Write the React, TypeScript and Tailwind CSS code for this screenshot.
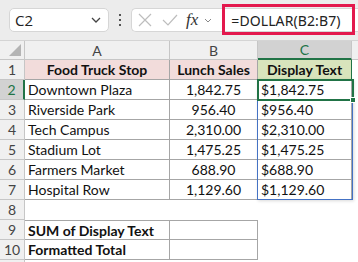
import React from "react";

const rows = [
  { n: 1, a: "Food Truck Stop", b: "Lunch Sales", c: "Display Text", head: true },
  { n: 2, a: "Downtown Plaza", b: "1,842.75", c: "$1,842.75" },
  { n: 3, a: "Riverside Park", b: "956.40", c: "$956.40" },
  { n: 4, a: "Tech Campus", b: "2,310.00", c: "$2,310.00" },
  { n: 5, a: "Stadium Lot", b: "1,475.25", c: "$1,475.25" },
  { n: 6, a: "Farmers Market", b: "688.90", c: "$688.90" },
  { n: 7, a: "Hospital Row", b: "1,129.60", c: "$1,129.60" },
];

const cellFont = { fontFamily: "Lato, 'Liberation Sans', sans-serif" };

function RowHead({ n, active }: { n?: number; active?: boolean }) {
  return (
    <div
      className={`w-[25px] h-full flex items-center justify-center border-r border-b border-[#c6c6c6] text-[14px] ${
        active ? "bg-[#d2d2d2] text-[#217346] border-r-2 border-r-[#217346]" : "bg-[#f0f0f0] text-[#444]"
      }`}
    >
      {n}
    </div>
  );
}

export default function App() {
  return (
    <div className="w-[358px] h-[262px] overflow-hidden bg-white relative" style={cellFont}>
      {/* formula bar */}
      <div className="h-[41px] bg-[#ececec] border-b border-[#d4d4d4] flex items-center pl-[9px] relative">
        <div className="w-[100px] h-[24px] bg-white rounded-[5px] border border-[#d6d6d6] flex items-center justify-between pl-[5px] pr-[7px]">
          <span className="text-[15px] text-[#222]" style={{ fontFamily: "'Open Sans', sans-serif" }}>C2</span>
          <svg width="10" height="6" viewBox="0 0 10 6"><path d="M1 1l4 4 4-4" fill="none" stroke="#444" strokeWidth="1.3" /></svg>
        </div>
        <div className="w-[22px] flex flex-col items-center gap-[3px]">
          <span className="w-[2px] h-[2px] bg-[#555]" />
          <span className="w-[2px] h-[2px] bg-[#555]" />
          <span className="w-[2px] h-[2px] bg-[#555]" />
        </div>
        <div className="flex-1 h-[24px] bg-white rounded-l-[5px] border border-r-0 border-[#d6d6d6] flex items-center pl-[5px]">
          <svg width="14" height="14" viewBox="0 0 14 14" className="ml-[1px]"><path d="M1 1l12 12M13 1L1 13" stroke="#bdbdbd" strokeWidth="1.2" /></svg>
          <svg width="16" height="12" viewBox="0 0 16 12" className="ml-[10px]"><path d="M1 6l5 5L15 1" fill="none" stroke="#bdbdbd" strokeWidth="1.2" /></svg>
          <span className="ml-[8px] text-[17px] italic text-[#333]" style={{ fontFamily: "'Liberation Serif', serif" }}>fx</span>
          <svg width="8" height="5" viewBox="0 0 8 5" className="ml-[6px]"><path d="M1 1l3 3 3-3" fill="none" stroke="#888" strokeWidth="1" /></svg>
          <span className="ml-[19px] text-[14px] text-[#222] tracking-[0.1px]" style={{ fontFamily: "'Noto Sans', sans-serif" }}>=DOLLAR(B2:B7)</span>
        </div>
        <div className="absolute left-[222px] top-[4px] w-[133px] h-[31px] border-[3px] border-[#e3184d]" />
      </div>

      {/* column headers */}
      <div className="flex h-[19px] text-[14px] text-[#444]">
        <div className="w-[25px] h-full bg-[#f0f0f0] border-r border-b border-[#c6c6c6] relative">
          <svg width="12" height="12" viewBox="0 0 12 12" className="absolute right-[3px] bottom-[3px]"><path d="M12 0V12H0Z" fill="#b4b4b4" /></svg>
        </div>
        <div className="w-[145px] h-full bg-[#f0f0f0] border-r border-b border-[#c6c6c6] flex items-center justify-center">A</div>
        <div className="w-[88px] h-full bg-[#f0f0f0] border-r border-b border-[#c6c6c6] flex items-center justify-center">B</div>
        <div className="w-[94px] h-full bg-[#d2d2d2] border-r border-[#c6c6c6] border-b-2 border-b-[#217346] flex items-center justify-center text-[#217346]">C</div>
        <div className="flex-1 h-full bg-[#f0f0f0] border-b border-[#c6c6c6]" />
      </div>

      {/* data */}
      <div className="relative text-[14px] text-[#111]">
        {rows.map((r) => (
          <div key={r.n} className="flex h-[20px]">
            <RowHead n={r.n} active={r.n === 2} />
            <div
              className={`w-[145px] h-full border-r border-b border-[#a6a6a6] flex items-center ${
                r.head ? "bg-[#f2dcdb] font-bold justify-center" : "pl-[3px]"
              }`}
            >
              {r.a}
            </div>
            <div
              className={`w-[88px] h-full border-r border-b border-[#a6a6a6] flex items-center justify-center ${
                r.head ? "bg-[#f2dcdb] font-bold" : ""
              }`}
            >
              {r.b}
            </div>
            <div
              className={`w-[94px] h-full border-r border-b flex items-center ${
                r.head ? "bg-[#d8e4bc] font-bold justify-center border-[#a6a6a6] border-r-[#217346]" : "pl-[3px] border-[#a6a6a6]"
              }`}
            >
              {r.c}
            </div>
          </div>
        ))}

        <div className="flex h-[20px]">
          <RowHead n={8} />
        </div>
        <div className="flex h-[20px]">
          <RowHead n={9} />
          <div className="w-[145px] h-full border-r border-b border-t border-[#a6a6a6] flex items-center pl-[3px] font-bold">SUM of Display Text</div>
          <div className="w-[88px] h-full border-r border-b border-t border-[#a6a6a6]" />
        </div>
        <div className="flex h-[20px]">
          <RowHead n={10} />
          <div className="w-[145px] h-full border-r border-b border-[#a6a6a6] flex items-center pl-[3px] font-bold">Formatted Total</div>
          <div className="w-[88px] h-full border-r border-b border-[#a6a6a6]" />
        </div>
        <div className="flex h-[20px]">
          <RowHead />
        </div>

        {/* referenced range outline C2:C7 */}
        <div className="absolute left-[257px] top-[19px] w-[96px] h-[121px] border border-[#4472c4] shadow-[1px_1px_3px_rgba(0,0,0,0.15)] pointer-events-none" />
        {/* active cell C2 */}
        <div className="absolute left-[257px] top-[19px] w-[97px] h-[22px] border-2 border-[#217346] pointer-events-none">
          <div className="absolute right-[-4px] bottom-[-4px] w-[6px] h-[6px] bg-[#217346] border border-white" />
        </div>
      </div>
    </div>
  );
}
